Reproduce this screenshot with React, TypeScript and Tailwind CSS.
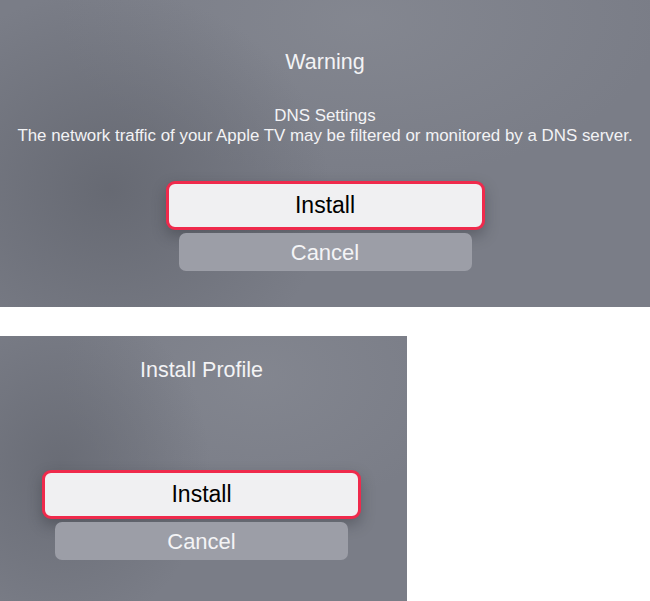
const font = { fontFamily: '"Liberation Sans", Arial, sans-serif' };

function Buttons() {
  return (
    <div className="flex flex-col items-center">
      <button
        type="button"
        className="w-[319px] h-[49px] rounded-[9px] border-[3px] border-[#ef2a4c] bg-[#f0f0f2] text-[23px] text-black flex items-center justify-center shadow-[0_6px_14px_rgba(40,42,50,0.35)]"
      >
        Install
      </button>
      <button
        type="button"
        className="mt-[3px] w-[293px] h-[38px] rounded-[7px] bg-[#9c9ea7] text-[22px] text-[#f4f4f6] flex items-center justify-center"
      >
        Cancel
      </button>
    </div>
  );
}

export default function App() {
  return (
    <div className="w-[650px] h-[601px] bg-white flex flex-col" style={font}>
      {/* Warning */}
      <section
        className="w-[650px] h-[307px] flex flex-col items-center text-[#f3f3f5]"
        style={{
          background:
            'radial-gradient(ellipse 220px 200px at 110px 190px, rgba(96,99,108,0.75), rgba(96,99,108,0) 100%), radial-gradient(ellipse 300px 160px at 360px 20px, rgba(138,141,150,0.6), rgba(138,141,150,0) 100%), #7a7d87',
        }}
      >
        <h1 className="mt-[49px] text-[21.5px] leading-[26px]">Warning</h1>
        <div className="mt-[31px] flex flex-col items-center text-[16.9px] leading-[20px]">
          <span>DNS Settings</span>
          <span>The network traffic of your Apple TV may be filtered or monitored by a DNS server.</span>
        </div>
        <div className="mt-[35px]">
          <Buttons />
        </div>
      </section>

      {/* Install Profile */}
      <section
        className="mt-[29px] w-[407px] h-[265px] flex flex-col items-center text-[#f3f3f5]"
        style={{
          background:
            'radial-gradient(ellipse 150px 170px at 60px 130px, rgba(98,101,110,0.7), rgba(98,101,110,0) 100%), radial-gradient(ellipse 200px 140px at 260px 40px, rgba(138,141,150,0.55), rgba(138,141,150,0) 100%), #7a7d87',
        }}
      >
        <h2 className="mt-[21px] -translate-x-[2px] text-[21.5px] leading-[26px]">Install Profile</h2>
        <div className="mt-[87px] -translate-x-[2px]">
          <Buttons />
        </div>
      </section>
    </div>
  );
}
